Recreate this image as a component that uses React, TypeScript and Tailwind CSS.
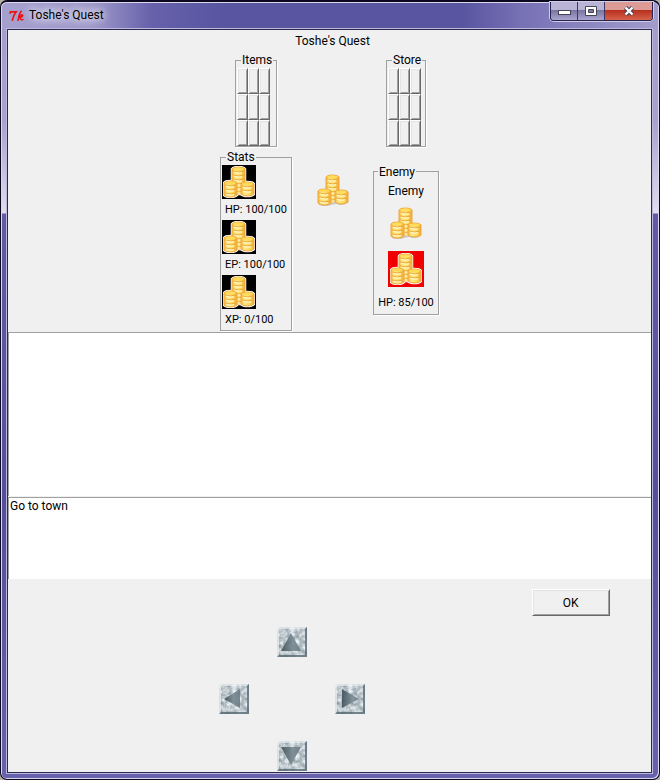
import React from "react";

type Stack = { x: number; top: number; bottom: number };

const stacks: Stack[] = [
  { x: 9, top: 1, bottom: 28 },
  { x: 1, top: 15, bottom: 31 },
  { x: 18, top: 16, bottom: 30 },
];

function stackPath({ x, top, bottom }: Stack) {
  return `M${x} ${top + 2}Q${x + 1} ${top} ${x + 6.5} ${top}Q${x + 12} ${top} ${x + 13} ${top + 2}V${bottom - 2}Q${x + 11} ${bottom} ${x + 6.5} ${bottom}Q${x + 2} ${bottom} ${x} ${bottom - 2}Z`;
}

function Coins({ halo = false }: { halo?: boolean }) {
  return (
    <svg className="block size-8" viewBox="0 0 32 32" aria-hidden="true">
      <defs>
        <linearGradient id="gold" x1="0" x2="1">
          <stop offset="0" stopColor="#f6bd45" />
          <stop offset="0.3" stopColor="#ffe887" />
          <stop offset="0.65" stopColor="#fdda5c" />
          <stop offset="1" stopColor="#f1ab3c" />
        </linearGradient>
      </defs>
      {halo &&
        stacks.map((s) => (
          <path key={s.x} d={stackPath(s)} fill="#fff" stroke="#fff" strokeWidth="2.5" />
        ))}
      {!halo && <path d="M2 30Q8 33 14 30L20 29Q25 32 31 28" fill="none" stroke="#c9c5bd" strokeWidth="1.5" />}
      {stacks.map((s) => {
        const rows: number[] = [];
        for (let y = s.top + 5; y < s.bottom - 1; y += 4) rows.push(y);
        return (
          <g key={s.x}>
            <path d={stackPath(s)} fill="url(#gold)" stroke="#efa53c" strokeWidth="1" />
            <ellipse cx={s.x + 6.5} cy={s.top + 2} rx="5.2" ry="1.4" fill="#ffdc58" />
            {rows.map((y) => (
              <g key={y} fill="none">
                <path d={`M${s.x + 1} ${y - 1}Q${s.x + 6.5} ${y + 1} ${s.x + 12} ${y - 1}`} stroke="#eba73c" strokeWidth="1" />
                <path d={`M${s.x + 2} ${y}Q${s.x + 6.5} ${y + 2} ${s.x + 10} ${y + 0.6}`} stroke="#fff6c4" strokeWidth="1.2" />
              </g>
            ))}
          </g>
        );
      })}
    </svg>
  );
}

function Group({ title, className, children }: { title: string; className: string; children: React.ReactNode }) {
  return (
    <fieldset className={`min-w-0 border border-[#a0a0a0] shadow-[1px_1px_0_#fff] ${className}`}>
      <legend className="ml-1 px-px leading-4">{title}</legend>
      {children}
    </fieldset>
  );
}

const raised =
  "border border-t-white border-l-white border-r-[#696969] border-b-[#696969] bg-[#f0f0f0] shadow-[inset_1px_1px_0_#e3e3e3,inset_-1px_-1px_0_#a0a0a0]";

function Slots({ label }: { label: string }) {
  return (
    <div className="grid w-[33px] grid-cols-3">
      {Array.from({ length: 9 }, (_, i) => (
        <button key={i} type="button" aria-label={`${label} ${i + 1}`} className={`h-[26px] ${raised}`} />
      ))}
    </div>
  );
}

function Stat({ label, value }: { label: string; value: string }) {
  return (
    <div className="h-[55px]">
      <div className="flex size-[34px] items-center justify-center bg-black">
        <Coins halo />
      </div>
      <p className="pt-[3px] pl-[3px] text-[11px] leading-4 whitespace-nowrap">
        {label}: {value}
      </p>
    </div>
  );
}

const arrows = {
  up: "M14 6L24 24H4Z",
  left: "M5 15L21 5V24Z",
  right: "M24 15L7 5V24Z",
  down: "M14 24L4 6H24Z",
};

function Arrow({ dir, className }: { dir: keyof typeof arrows; className: string }) {
  return (
    <button type="button" aria-label={dir} className={`size-[30px] ${className}`}>
      <svg className="block size-[30px]" viewBox="0 0 30 30" aria-hidden="true">
        <defs>
          <filter id={`stone-${dir}`} x="0" y="0" width="1" height="1" colorInterpolationFilters="sRGB">
            <feTurbulence type="fractalNoise" baseFrequency="0.22" numOctaves="3" seed="4" />
            <feColorMatrix values="0.6 0 0 0 0.45  0.56 0 0 0 0.51  0.54 0 0 0 0.54  0 0 0 0 1" />
          </filter>
          <linearGradient id={`shade-${dir}`} x1="0" x2="1">
            <stop offset="0" stopColor="#3f5159" />
            <stop offset="0.6" stopColor="#7b8b94" />
            <stop offset="1" stopColor="#6b7c86" />
          </linearGradient>
        </defs>
        <rect width="30" height="30" filter={`url(#stone-${dir})`} />
        <path d="M0 0H29L27 2H2V28L0 30Z" fill="#edf1f2" fillOpacity="0.7" />
        <path d="M30 0V30H0L2 28H28V2Z" fill="#50636d" fillOpacity="0.75" />
        <path d={arrows[dir]} fill={`url(#shade-${dir})`} fillOpacity="0.92" />
      </svg>
    </button>
  );
}

const caption = "flex h-full items-center justify-center";

export default function App() {
  return (
    <div className="bg-[#b5b0a5] font-[Roboto,'Open_Sans',sans-serif] text-[12px] text-black">
      <div className="flex min-h-screen flex-col rounded-[7px] border border-t-2 border-[#0c0820] bg-[linear-gradient(180deg,#a29dcc_0,#a7a2cf_120px,#e3dcec_211px,#625aa5_212px,#554f9b_500px,#6862ac_100%)] pr-[7px] pb-[6px] pl-[6px] shadow-[inset_1px_1px_0_#dcd8ee,inset_-1px_-1px_0_#dcd8ee]">
        <header className="-mr-[6px] -ml-[5px] mt-px flex h-[26px] rounded-t-[5px] bg-[linear-gradient(90deg,#a6a0cf_0,#a09acb_90px,#6661aa_150px,#5955a0_220px,#5955a0_460px,#7771b5_520px,#a29dcc_100%)] pl-[7px]">
          <svg className="mt-[7px] h-[12px] w-[16px]" viewBox="0 0 16 12" aria-hidden="true">
            <path d="M.8 3.8L1.5 1.8H7.2Q4.5 5 3.2 10.8" fill="none" stroke="#f01010" strokeWidth="1.7" />
            <path d="M12.5.8Q9.8 4 9 11M9.8 7.4Q12.4 4 13.8 5.2Q13.6 7 10.8 7.4Q11.8 10.8 14.6 9.4" fill="none" stroke="#f01010" strokeWidth="1.5" />
          </svg>
          <h1 className="ml-1 pt-1 leading-4 [text-shadow:0_0_8px_#fff,0_0_8px_#fff]">Toshe's Quest</h1>
          <div className="mr-[5px] ml-auto -mt-px flex h-[19px] overflow-hidden rounded-b-[4px] border border-t-0 border-[#28234c] shadow-[0_0_0_1px_#d0cce6]">
            <button type="button" aria-label="Minimize" className={`w-[27px] border-r border-[#3c3765] bg-[linear-gradient(#b9b4d5_0_45%,#79749f_46%,#aaa5d0)] ${caption}`}>
              <svg className="mt-1 h-[6px] w-[13px]" viewBox="0 0 13 6" aria-hidden="true">
                <rect x=".5" y=".5" width="12" height="4" fill="#fff" stroke="#454558" />
              </svg>
            </button>
            <button type="button" aria-label="Maximize" className={`w-[27px] border-r border-[#3c3765] bg-[linear-gradient(#b9b4d5_0_45%,#79749f_46%,#aaa5d0)] ${caption}`}>
              <svg className="h-[10px] w-[12px]" viewBox="0 0 12 10" aria-hidden="true">
                <path fillRule="evenodd" d="M.5.5H11.5V9.5H.5ZM3.5 3.5V6.5H8.5V3.5Z" fill="#fff" stroke="#454558" />
              </svg>
            </button>
            <button type="button" aria-label="Close" className={`w-[47px] bg-[linear-gradient(#dc9c95_0_45%,#b8301d_46%,#d5624c)] ${caption}`}>
              <svg className="h-[10px] w-[12px]" viewBox="0 0 12 10" aria-hidden="true">
                <path d="M2.5 1.5L9.5 8.5M9.5 1.5L2.5 8.5" stroke="#454558" strokeWidth="4.4" />
                <path d="M2.5 1.5L9.5 8.5M9.5 1.5L2.5 8.5" stroke="#fff" strokeWidth="2.4" />
              </svg>
            </button>
          </div>
        </header>

        <main className="flex grow flex-col border border-[#2c2950] bg-[#f0f0f0] outline outline-[#bdb8de]">
          <section className="grid grid-cols-[72px_81px_66px] justify-center justify-items-center pb-px">
            <h2 className="col-start-2 h-[22px] pt-[3px] leading-4 whitespace-nowrap">Toshe's Quest</h2>
            <Group title="Items" className="col-start-1 row-start-2 w-[42px] pl-px">
              <Slots label="Item" />
            </Group>
            <Group title="Store" className="col-start-3 row-start-2 w-[40px] pl-px">
              <Slots label="Store slot" />
            </Group>
            <Group title="Stats" className="row-start-3 mt-[2px] w-[72px] pl-px">
              <Stat label="HP" value="100/100" />
              <Stat label="EP" value="100/100" />
              <Stat label="XP" value="0/100" />
            </Group>
            <div className="row-start-3 mt-[27px]">
              <Coins />
            </div>
            <Group title="Enemy" className="row-start-3 w-[66px] self-center">
              <div className="flex flex-col items-center pb-[3px]">
                <p className="pt-[3px] leading-4">Enemy</p>
                <div className="mt-2">
                  <Coins />
                </div>
                <div className="mt-3 flex size-9 items-center justify-center bg-[#f00000]">
                  <Coins halo />
                </div>
                <p className="mt-2 text-[11px] leading-4 whitespace-nowrap">HP: 85/100</p>
              </div>
            </Group>
          </section>
          <textarea aria-label="Story" className="block h-[164px] w-full resize-none border-t border-l border-[#a0a0a0] bg-white outline-none" />
          <ul className="mt-px h-[82px] border-t border-l border-[#a0a0a0] bg-white pl-px leading-4">
            <li>Go to town</li>
          </ul>
          <section className="grid grid-cols-[3fr_1fr]">
            <div className="mt-[48px] grid grid-cols-[58px_58px_30px] grid-rows-[57px_57px_30px] justify-center pl-[86px]">
              <Arrow dir="up" className="col-start-2 row-start-1" />
              <Arrow dir="left" className="col-start-1 row-start-2" />
              <Arrow dir="right" className="col-start-3 row-start-2" />
              <Arrow dir="down" className="col-start-2 row-start-3" />
            </div>
            <button type="button" className={`mt-[10px] h-[27px] w-[78px] justify-self-center ${raised}`}>
              OK
            </button>
          </section>
        </main>
      </div>
    </div>
  );
}
